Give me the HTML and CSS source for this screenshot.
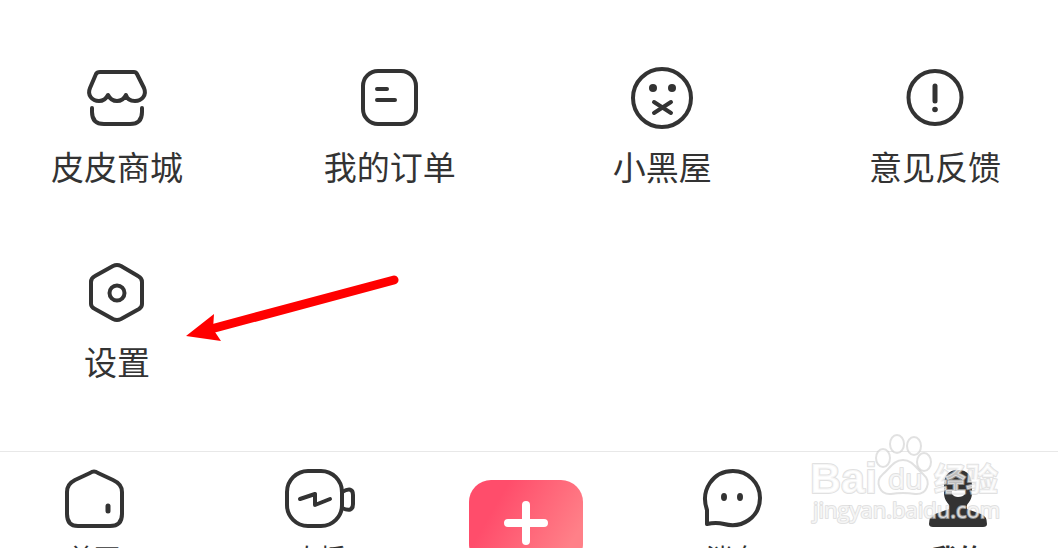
FILE: index.html
```html
<!DOCTYPE html>
<html lang="zh-CN">
<head>
  <meta charset="UTF-8">
  <meta name="viewport" content="width=device-width, initial-scale=1">
  <title>我的</title>
  <link rel="stylesheet" href="styles.css">
</head>
<body>
  <main class="services">
    <a class="service" href="#">
      <svg class="icon" viewBox="0 0 64 64">
        <path d="M15 6H49Q51 6 52 8L59 22C62 29 57 35 50 35C45 35 42 33 41 29C39 33 37 35 32 35C27 35 25 33 23 29C21 33 19 35 14 35C7 35 2 29 5 22L11 8Q12 6 15 6Z"/>
        <path d="M7 42V46Q7 58 19 58H45Q57 58 57 46V42"/>
      </svg>
      <span>皮皮商城</span>
    </a>
    <a class="service" href="#">
      <svg class="icon" viewBox="0 0 64 64">
        <rect x="5" y="5" width="53" height="53" rx="15"/>
        <path d="M19 23H29M19 34H37"/>
      </svg>
      <span>我的订单</span>
    </a>
    <a class="service" href="#">
      <svg class="icon" viewBox="0 0 64 64">
        <circle cx="32" cy="32" r="29"/>
        <circle class="solid" cx="23" cy="22" r="4"/>
        <circle class="solid" cx="42" cy="22" r="4"/>
        <path d="M24 36L41 47M41 36L24 47"/>
      </svg>
      <span>小黑屋</span>
    </a>
    <a class="service" href="#">
      <svg class="icon" viewBox="0 0 64 64">
        <circle cx="32" cy="31.5" r="26.5"/>
        <path class="thick" d="M32 20V35"/>
        <circle class="solid" cx="32" cy="43.5" r="2.8"/>
      </svg>
      <span>意见反馈</span>
    </a>
    <a class="service" href="#">
      <svg class="icon" viewBox="0 0 64 64">
        <path d="M28 5Q32 3 36 5L53 15Q57 17 57 21V43Q57 46 54 48L36 58Q32 60 28 58L10 48Q6 46 6 43V21Q6 17 10 15Z"/>
        <circle cx="32" cy="32" r="7.5"/>
      </svg>
      <span>设置</span>
    </a>
    <svg class="arrow" viewBox="0 0 220 70">
      <path class="arrow-line" d="M30 54L213 5"/>
      <path class="arrow-head" d="M5 61L33 39L32 54L40 66Z"/>
    </svg>
  </main>

  <nav class="tabbar">
    <a class="tab" href="#">
      <svg class="icon" viewBox="0 0 64 64">
        <path d="M28 6Q32 3 36 6L51 13Q60 17 60 25V47Q60 59 48 59H16Q5 59 5 47V25Q5 17 13 13Z"/>
        <path class="thick" d="M46 39V44"/>
      </svg>
      <span>首页</span>
    </a>
    <a class="tab" href="#">
      <svg class="icon icon-wide" viewBox="0 0 72 64">
        <rect x="3" y="4" width="55" height="55" rx="21"/>
        <path d="M58 25Q69 19 69 28V37Q69 46 58 41"/>
        <path d="M16 32L31 27V38L46 32"/>
      </svg>
      <span>直播</span>
    </a>
    <button class="publish" type="button" aria-label="发布">
      <svg class="plus" viewBox="0 0 46 46">
        <path d="M23 5V41M5 23H41"/>
      </svg>
    </button>
    <a class="tab" href="#">
      <svg class="icon" viewBox="0 0 64 64">
        <path d="M7 57V43C0 23 13 4 33 4C48 4 60 16 60 31C60 50 42 62 24 57Q16 55 7 57Z"/>
        <ellipse class="solid" cx="24" cy="30" rx="3" ry="4"/>
        <ellipse class="solid" cx="40" cy="30" rx="3" ry="4"/>
      </svg>
      <span>消息</span>
    </a>
    <a class="tab tab-active" href="#">
      <svg class="icon" viewBox="0 0 64 64">
        <path class="solid" d="M32 3C22 3 18 9 18 19V26C18 32 21 35 23 38V42L9 47Q3 49 3 57Q3 60 7 60H57Q61 60 61 57Q61 49 55 47L41 42V38C43 35 46 32 46 26V19C46 9 42 3 32 3Z"/>
        <path class="smile" d="M26 24H39V27Q37 30 32 30Q28 30 26 27Z"/>
      </svg>
      <span>我的</span>
    </a>

    <svg class="watermark" viewBox="0 0 200 100">
      <ellipse cx="79" cy="28" rx="7" ry="9"/>
      <ellipse cx="93" cy="14" rx="7" ry="9"/>
      <ellipse cx="110" cy="16" rx="7" ry="9"/>
      <ellipse cx="120" cy="32" rx="7" ry="9"/>
      <path d="M99 30C90 30 86 38 79 44C70 52 76 65 87 64Q99 62 111 64C123 65 128 52 119 44C112 38 108 30 99 30Z"/>
      <text class="mark-latin" x="6" y="63">Bai</text>
      <text class="mark-du" x="84" y="59">du</text>
      <text class="mark-cjk" x="130" y="61">经验</text>
      <text class="mark-url" x="9" y="88">jingyan.baidu.com</text>
    </svg>
  </nav>
</body>
</html>
```
FILE: styles.css
```css
* {
  margin: 0;
  padding: 0;
  box-sizing: border-box;
}

body {
  height: 100vh;
  overflow: hidden;
  background: #fff;
  color: #333;
  font-family: "Noto Sans CJK SC", sans-serif;
}

a {
  color: inherit;
  text-decoration: none;
}

.services {
  position: relative;
  display: grid;
  grid-template-columns: repeat(4, 132px);
  justify-content: space-between;
  row-gap: 75px;
  padding: 66px 57px 70px 51px;
}

.service {
  display: flex;
  flex-direction: column;
  align-items: center;
  gap: 16px;
  font-size: 33px;
  line-height: 40px;
  white-space: nowrap;
}

.icon {
  width: 64px;
  height: 64px;
  fill: none;
  stroke: #333;
  stroke-width: 4;
  stroke-linecap: round;
  stroke-linejoin: round;
}

.icon-wide {
  width: 72px;
}

.icon .solid {
  fill: #333;
  stroke: none;
}

.icon .thick {
  stroke-width: 5;
}

.icon .smile {
  fill: #fff;
  stroke: none;
}

/* pointer to the settings entry */
.arrow {
  position: absolute;
  left: 181px;
  top: 275px;
  width: 220px;
  height: 70px;
}

.arrow-line {
  fill: none;
  stroke: #f00;
  stroke-width: 9;
  stroke-linecap: round;
}

.arrow-head {
  fill: #f00;
}

.tabbar {
  position: relative;
  display: grid;
  grid-template-columns: 188fr 264fr 148fr 264fr 188fr;
  justify-items: center;
  align-items: start;
  padding-right: 6px;
  border-top: 1px solid #e8e8e8;
}

.tab {
  display: flex;
  flex-direction: column;
  align-items: center;
  gap: 8px;
  padding-top: 15px;
  font-size: 26px;
  line-height: 36px;
}

.tab-active {
  font-weight: bold;
}

.publish {
  display: flex;
  align-items: center;
  justify-content: center;
  width: 114px;
  height: 86px;
  margin-top: 28px;
  border: none;
  border-radius: 22px;
  background: linear-gradient(120deg, #ff4d6b 25%, #ff8088 85%);
  cursor: pointer;
}

.plus {
  width: 46px;
  height: 46px;
  fill: none;
  stroke: #fff;
  stroke-width: 8;
  stroke-linecap: round;
}

.watermark {
  position: absolute;
  right: 54px;
  top: -22px;
  width: 200px;
  height: 100px;
  fill: rgba(255, 255, 255, 0.7);
  stroke: rgba(205, 205, 205, 0.6);
  stroke-width: 2;
  stroke-linejoin: round;
  pointer-events: none;
}

.mark-latin {
  font: bold 43px "Liberation Sans", sans-serif;
  paint-order: stroke;
}

.mark-du {
  font: 28px "Open Sans", sans-serif;
  paint-order: stroke;
}

.mark-cjk {
  font: bold 32px "Noto Sans CJK SC", sans-serif;
  paint-order: stroke;
}

.mark-url {
  font: 22px "Open Sans", sans-serif;
  paint-order: stroke;
}
```
